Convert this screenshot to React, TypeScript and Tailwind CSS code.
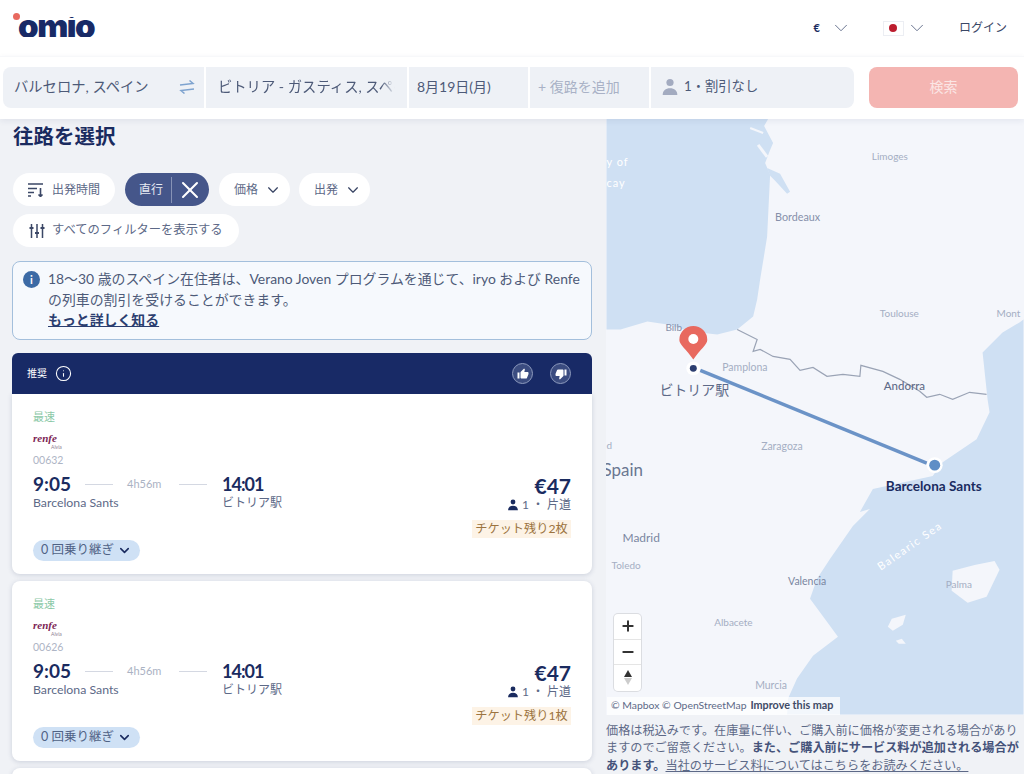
import { ChevronDown, X, Info, Plus, Minus } from 'lucide-react';
import { MdThumbUp, MdThumbDown } from 'react-icons/md';

const results = [
    { train: '00632', seats: 'チケット残り2枚' },
    { train: '00626', seats: 'チケット残り1枚' },
];

const cityLabels = [
    { x: 872, y: 160, text: 'Limoges', className: 'fill-[#a4aec3] text-[10px]' },
    { x: 775, y: 221, text: 'Bordeaux', className: 'fill-[#8690aa] text-[10.8px]' },
    { x: 880, y: 317, text: 'Toulouse', className: 'fill-[#a4aec3] text-[10px]' },
    { x: 997, y: 317, text: 'Mont', className: 'fill-[#a4aec3] text-[10px]' },
    { x: 665, y: 332, text: 'Bilb', className: 'fill-[#8690aa] text-[10px]' },
    { x: 722, y: 372, text: 'Pamplona', className: 'fill-[#a4aec3] text-[10.5px]' },
    { x: 884, y: 391, text: 'Andorra', className: 'fill-[#5f6b88] text-[11.5px] font-medium' },
    { x: 761, y: 451, text: 'Zaragoza', className: 'fill-[#a4aec3] text-[10.500px]' },
    { x: 606, y: 450, text: 'd', className: 'fill-[#a4aec3] text-[10px]' },
    { x: 602, y: 477, text: 'Spain', className: 'fill-[#6a7691] text-[17px]' },
    { x: 622, y: 543, text: 'Madrid', className: 'fill-[#7a86a1] text-[12px]' },
    { x: 611, y: 570, text: 'Toledo', className: 'fill-[#a4aec3] text-[10px]' },
    { x: 788, y: 586, text: 'Valencia', className: 'fill-[#7a86a1] text-[10.5px]' },
    { x: 946, y: 589, text: 'Palma', className: 'fill-[#a4aec3] text-[10px]' },
    { x: 714, y: 627, text: 'Albacete', className: 'fill-[#a4aec3] text-[10px]' },
    { x: 755, y: 690, text: 'Murcia', className: 'fill-[#a4aec3] text-[10.500px]' },
];

function PersonIcon({ className }: { className: string }) {
    return (
        <svg viewBox="0 0 16 16" className={className} fill="currentColor">
            <circle cx="8" cy="4" r="3.2" />
            <path d="M1.5 15c0-4 2.6-6 6.5-6s6.500 2 6.500 6z" />
        </svg>
    );
}

function SearchField({ className, children }: { className: string; children: React.ReactNode }) {
    return <div className={`flex h-full items-center overflow-hidden whitespace-nowrap pb-[2px] ${className}`}>{children}</div>;
}

function Chip({ label, icon, dropdown, wide }: { label: string; icon?: React.ReactNode; dropdown?: boolean; wide?: boolean }) {
    return (
        <div className={`flex h-[33px] items-center rounded-full bg-white text-[#5d6987] ${wide ? 'gap-[7px] px-4 text-[12.300px]' : 'gap-2 pl-[15px] text-xs'} ${!wide && dropdown ? 'pr-[10px]' : ''} ${!wide && !dropdown ? 'pr-[15px]' : ''}`}>
            {icon}
            <span>{label}</span>
            {dropdown && <ChevronDown className="h-[14px] w-[14px] scale-125 text-[#3b4766]" strokeWidth={1.75} />}
        </div>
    );
}

function ResultCard({ train, seats, rounded }: { train: string; seats: string; rounded: string }) {
    return (
        <div className={`flex h-[180px] shrink-0 flex-col bg-white px-[21px] pt-4 pb-[13px] shadow-[0_1px_5px_rgba(40,55,100,0.18)] ${rounded}`}>
            <div className="h-[14px] text-[11px] leading-[14px] text-[#8cc9a8]">最速</div>
            <div className="h-[19px] pt-[10px]">
                <div className="font-['Liberation_Serif',serif] text-[11px] font-bold italic leading-[9px] text-[#7d1f55]">renfe</div>
                <div className="ml-[18px] mt-[2px] text-[5px] leading-[5px] text-[#8a7d90]">Alvia</div>
            </div>
            <div className="mt-[10px] h-[14px] text-[10.5px] leading-[14px] text-[#aeb5c5]">{train}</div>
            <div className="mt-[8px] flex flex-1 justify-between">
                <div className="flex flex-col">
                    <div className="flex h-[18px] items-center text-[#1a2b5f]">
                        <div className="flex w-[189px] items-center">
                            <span className="w-[38px] whitespace-nowrap text-[19px] font-bold">9:05</span>
                            <span className="ml-[14px] h-px w-[28px] bg-[#d4d8e2]" />
                            <span className="ml-[14px] w-[38px] text-[11px] text-[#aab2c3]">4h56m</span>
                            <span className="ml-[14px] h-px w-[28px] bg-[#d4d8e2]" />
                        </div>
                        <span className="text-[18px] font-bold tracking-[-1px]">14:01</span>
                    </div>
                    <div className="mt-[2px] flex text-xs leading-[16px] text-[#5d6987]">
                        <span className="w-[189px] text-[12.300px]">Barcelona Sants</span>
                        <span>ビトリア駅</span>
                    </div>
                    <div className="mt-auto flex h-[21px] w-[107px] items-center justify-center gap-[3px] rounded-full bg-[#cfe1f5] text-[12.500px] text-[#4f6285]">
                        <span>0 回乗り継ぎ</span>
                        <ChevronDown className="h-[15px] w-[15px] text-[#1a2b5f]" strokeWidth={2.5} />
                    </div>
                </div>
                <div className="flex flex-col items-end">
                    <div className="h-[22px] text-[21px] font-bold leading-[22px] text-[#1a2b5f]">€47</div>
                    <div className="flex h-[16px] items-center gap-[3px] text-xs text-[#5d6987]">
                        <PersonIcon className="h-[12px] w-[12px] text-[#1a2b5f]" />
                        <span>1 ・ 片道</span>
                    </div>
                    <div className="mt-[7px] flex h-[18px] w-[99px] items-center justify-center bg-[#fdf3e6] text-[12.200px] text-[#9c7440]">
                        {seats}
                    </div>
                </div>
            </div>
        </div>
    );
}

function MapArea() {
    return (
        <div className="relative h-[597px] w-full overflow-hidden bg-[#f4f6fb]">
            <svg viewBox="606 119 418 597" className="block h-full w-full font-[Lato,sans-serif]">
                <path fill="#cfe0f3" d="M606 119H768L764 126L773 143L770 150L765 163L770 175L767 237L760 280L757 300L753 317L737 330L717 335L690 332L667 325L647 322L620 330L606 330Z" />
                <path fill="#cfe0f3" d="M767 168L780 174L790 192L787 194L775 181L770 176Z" />
                <path fill="#cfe0f3" d="M1024 320L1020 323L1003 333L983 353L988 400L990 413L977 440L943 463L933 477L873 490L860 513L870 510L853 527L830 560L817 580L810 600L827 623L838 638L813 657L797 680L788 700L787 716H1024Z" />
                <path fill="#f4f6fb" d="M953 572L975 566L995 562L1000 571L987 598L968 604L952 592Z" />
                <path fill="#f4f6fb" d="M888 628L892 620L906 616L903 626L893 632Z" />
                <path fill="#f4f6fb" d="M896 642L902 640L906 645L899 645Z" />
                <path fill="none" stroke="#f4f6fb" strokeWidth="2" d="M750 128L763 133" />
                <path fill="none" stroke="#f4f6fb" strokeWidth="3" d="M758 145L767 157" />
                <path fill="none" stroke="#9aa3b5" strokeWidth="1.200" d="M737 330L747 335L757 340L753 352L760 350L773 357L790 360L800 371L813 368L827 377L843 375L860 377L861 366L883 372L900 380L920 392L927 398L940 395L953 400L970 393L987 395" />
                <line x1="700" y1="371" x2="927" y2="464" stroke="#6b93c7" strokeWidth="3.500" />
                <circle cx="693" cy="369" r="7" fill="#fff" />
                <circle cx="693" cy="369" r="3.500" fill="#2c3e70" />
                <circle cx="935" cy="466" r="8" fill="#fff" />
                <circle cx="935" cy="466" r="5.500" fill="#5f8ec6" />
                {cityLabels.map((c) => (
                    <text key={c.text} x={c.x} y={c.y} className={c.className}>{c.text}</text>
                ))}
                <path fill="#e8695f" d="M693 360C686 350 679 345 679 340.500a14 14 0 0 1 28 0C707 345 700 350 693 360Z" />
                <circle cx="693" cy="339.500" r="5" fill="#fff" />
                <text x="606" y="166" className="fill-white text-[11px] tracking-[1px]">y of</text>
                <text x="606" y="187" className="fill-white text-[11px] tracking-[1px]">cay</text>
                <text x="881" y="572" transform="rotate(-35 881 572)" className="fill-white text-[11px] tracking-[1.500px]">Balearic Sea</text>
                <text x="659" y="396" className="fill-[#5d6987] font-['Noto_Sans_CJK_JP',sans-serif] text-sm">ビトリア駅</text>
                <text x="886" y="492" className="fill-[#1a2b5f] text-[13.600px] font-bold">Barcelona Sants</text>
            </svg>
            <div className="absolute bottom-[24px] left-2 flex h-[77px] w-[27px] flex-col rounded bg-white shadow-[0_0_0_1px_rgba(0,0,0,0.1)]">
                <div className="flex h-[26px] items-center justify-center border-b border-[#e5e5e5]">
                    <Plus className="h-4 w-4 text-[#333]" strokeWidth={3} />
                </div>
                <div className="flex h-[25px] items-center justify-center border-b border-[#e5e5e5]">
                    <Minus className="h-4 w-4 text-[#333]" strokeWidth={3} />
                </div>
                <div className="flex h-[26px] flex-col items-center justify-center gap-px">
                    <span className="h-0 w-0 border-x-[4px] border-b-[7px] border-x-transparent border-b-[#333]" />
                    <span className="h-0 w-0 border-x-[4px] border-t-[7px] border-x-transparent border-t-[#ccc]" />
                </div>
            </div>
            <div className="absolute bottom-0 left-px flex h-[18px] w-[233px] items-center gap-[4px] whitespace-nowrap bg-white/75 pl-[4px] text-[10.400px] text-[#5d6987]">
                <span>© Mapbox © OpenStreetMap</span>
                <span className="text-[10.800px] font-bold text-[#3f4a66]">Improve this map</span>
            </div>
        </div>
    );
}

export default function App() {
    return (
        <div className="flex h-[774px] w-[1024px] flex-col overflow-hidden bg-white font-[Lato,'Noto_Sans_CJK_JP',sans-serif]">
            <header className="flex h-14 shrink-0 items-center justify-between pl-[13px] pr-[17px]">
                <div className="relative h-[38px] w-[90px]">
                    {/* clipped at the x-height: the logo's i has no dot */}
                    <div className="absolute left-[5px] top-[8px] h-[20px] w-[85px] overflow-hidden">
                        <span className="absolute left-0 top-[-15px] font-[Inter,sans-serif] text-[33px] font-black tracking-[-1.5px] text-[#182a66]">omio</span>
                    </div>
                    <span className="absolute left-0 top-[4px] h-[7px] w-[7px] rounded-full bg-[#e8695f]" />
                </div>
                <div className="flex items-center text-[#3b4766]">
                    <span className="text-[11px] font-bold text-[#1a2b5f]">€</span>
                    <ChevronDown className="ml-[10px] h-[22px] w-[22px] text-[#5d6987]" strokeWidth={1} />
                    <span className="ml-[32px] flex h-[13px] w-[19px] items-center justify-center bg-white shadow-[0_0_0_1px_#eceef3]">
                        <span className="h-2 w-2 rounded-full bg-[#bc1c2e]" />
                    </span>
                    <ChevronDown className="ml-[3px] h-[22px] w-[22px] text-[#5d6987]" strokeWidth={1} />
                    <span className="ml-[31px] text-xs">ログイン</span>
                </div>
            </header>

            <div className="relative z-10 flex h-[63px] shrink-0 items-start gap-[15px] border-t border-[#f7f8fa] bg-white pl-[3px] pt-[10px] shadow-[0_2px_6px_rgba(40,55,100,0.08)]">
                <div className="flex h-[41px] w-[851px] gap-[2px] text-[#4d5a78]">
                    <SearchField className="w-[201px] justify-between rounded-l-lg bg-[#eef1f6] pl-[11px] pr-[9px]">
                        <span className="text-[14.300px]">バルセロナ, スペイン</span>
                        <svg viewBox="0 0 16 14" className="h-[14px] w-[16px]" fill="none" stroke="#7ea3cf" strokeWidth="1.500">
                            <path d="M1 5l13-1.500L10.500 .5" />
                            <path d="M15 9l-13 1.500L5.500 13.500" />
                        </svg>
                    </SearchField>
                    <SearchField className="w-[201px] bg-[#eef1f6] pl-3">
                        <span className="w-[177px] overflow-hidden text-[14.300px] [mask-image:linear-gradient(to_right,black_92%,transparent)]">ビトリア - ガスティス, スペイン</span>
                    </SearchField>
                    <SearchField className="w-[119px] bg-[#eef1f6] pl-2">
                        <span className="text-sm">8月19日(月)</span>
                    </SearchField>
                    <SearchField className="w-[119px] bg-[#eef1f6] pl-2">
                        <span className="text-sm text-[#a9b1c6]">+ 復路を追加</span>
                    </SearchField>
                    <SearchField className="flex-1 gap-[5px] rounded-r-lg bg-[#eef1f6] pl-[10px]">
                        <PersonIcon className="h-[18px] w-[18px] text-[#a3abc0]" />
                        <span className="text-[13.300px]">1・割引なし</span>
                    </SearchField>
                </div>
                <div className="flex h-[41px] w-[149px] items-center justify-center rounded-lg bg-[#f4b5b2] pb-[2px] text-sm text-[#fbe6e5]">検索</div>
            </div>

            <main className="flex min-h-0 flex-1">
                <div className="flex w-[606px] shrink-0 flex-col overflow-hidden bg-[#f0f2f6] pl-3 pr-[14px]">
                    <h1 className="ml-px mt-[4px] text-[20.500px] font-bold leading-[26px] text-[#1a2b5f]">往路を選択</h1>
                    <div className="ml-px mt-[24px] flex gap-[10px]">
                        <Chip
                            label="出発時間"
                            icon={
                                <svg viewBox="0 0 16 15" className="h-[15px] w-[16px]" fill="none" stroke="#3b4766" strokeWidth="1.600">
                                    <path d="M0 2h15M0 6.500h9M0 10.500h6M0 14h3" />
                                    <path d="M12.500 6v8.500M10.500 12.500l2 2 2-2" />
                                </svg>
                            }
                        />
                        <div className="flex h-[33px] w-[84px] items-center rounded-full bg-[#45568a] pl-[14px] text-xs text-[#e6e9f2]">
                            <span>直行</span>
                            <span className="ml-[8px] h-[26px] w-px bg-[#8793b6]" />
                            <X className="ml-[4px] h-7 w-7 text-white" strokeWidth={1.75} />
                        </div>
                        <Chip label="価格" dropdown />
                        <div className="-ml-px">
                            <Chip label="出発" dropdown />
                        </div>
                    </div>
                    <div className="ml-px mt-2 flex">
                        <Chip
                            wide
                            label="すべてのフィルターを表示する"
                            icon={
                                <svg viewBox="0 0 16 16" className="h-[16px] w-[16px]" fill="none" stroke="#3b4766" strokeWidth="1.500">
                                    <path d="M2.500 1v14M8 1v14M13.500 1v14" />
                                    <path d="M.5 5h4M6 10h4M11.500 5h4" strokeWidth="2.200" />
                                </svg>
                            }
                        />
                    </div>
                    <div className="mt-[14px] flex h-[79px] shrink-0 gap-[8px] rounded-lg border border-[#a3bfdc] bg-[#f6f9fd] pl-[10px] pr-2 pt-[7px] text-[13.900px] leading-[20.500px] text-[#4d5a78]">
                        <span className="mt-[2px] flex h-[17px] w-[17px] shrink-0 items-center justify-center rounded-full bg-[#3c6aa5]">
                            <span className="text-[11px] font-bold leading-none text-white">i</span>
                        </span>
                        <div className="min-w-0 flex-1">
                            <div className="whitespace-nowrap">18〜30 歳のスペイン在住者は、Verano Joven プログラムを通じて、iryo および Renfe</div>
                            <div>の列車の割引を受けることができます。</div>
                            <div className="font-bold text-[#2b3e70] underline">もっと詳しく知る</div>
                        </div>
                    </div>
                    <div className="mt-[13px] flex h-[41px] shrink-0 items-center rounded-t-md bg-[#182a66] pl-[15px] pr-[21px] text-white">
                        <span className="text-[10px]">推奨</span>
                        <Info className="ml-[8px] h-[17px] w-[17px]" strokeWidth={1.5} />
                        <span className="ml-auto flex h-[21px] w-[21px] items-center justify-center rounded-full border border-[#8d9abd] bg-[#3b4c80]">
                            <MdThumbUp className="h-3 w-3" />
                        </span>
                        <span className="ml-[17px] flex h-[21px] w-[21px] items-center justify-center rounded-full border border-[#8d9abd] bg-[#3b4c80]">
                            <MdThumbDown className="h-3 w-3" />
                        </span>
                    </div>
                    <div className="flex flex-col gap-[7px]">
                        <ResultCard train={results[0].train} seats={results[0].seats} rounded="rounded-b-lg" />
                        <ResultCard train={results[1].train} seats={results[1].seats} rounded="rounded-lg" />
                        <div className="h-10 shrink-0 rounded-lg bg-white shadow-[0_1px_5px_rgba(40,55,100,0.18)]" />
                    </div>
                </div>

                <div className="flex min-w-0 flex-1 flex-col bg-[#f0f2f6]">
                    <MapArea />
                    <p className="mt-[7px] w-[418px] text-[12.150px] leading-[17.500px] text-[#5d6987]">
                        価格は税込みです。在庫量に伴い、ご購入前に価格が変更される場合がありますのでご留意ください。
                        <b className="text-[#45527a]">また、ご購入前にサービス料が追加される場合があります。</b>
                        <span className="underline">当社のサービス料についてはこちらをお読みください。</span>
                    </p>
                </div>
            </main>
        </div>
    );
}
